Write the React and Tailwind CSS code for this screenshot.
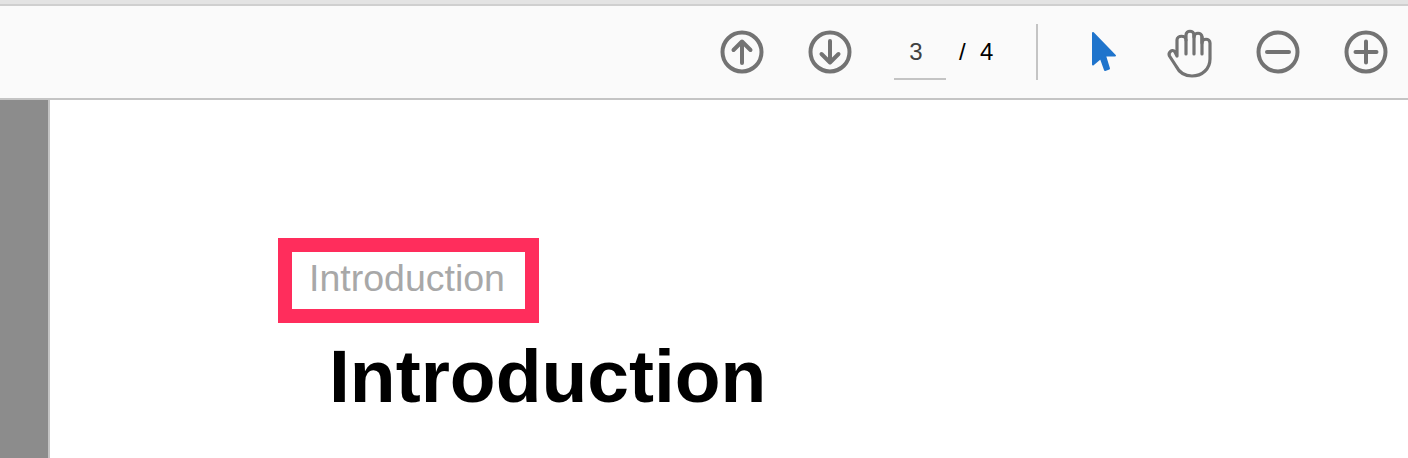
const G = "#737373";
function Circle({ children }) {
  return (
    <svg width="44" height="44" viewBox="0 0 44 44" fill="none" stroke={G} strokeWidth="4" strokeLinecap="round" strokeLinejoin="round">
      <circle cx="22" cy="22" r="19.5" />
      {children}
    </svg>
  );
}
export default function App() {
  return (
    <div className="w-[1408px] h-[458px] overflow-hidden flex flex-col bg-white font-['Liberation_Sans',Arial,sans-serif]">
      <div className="h-1 bg-[#e3e3e3]" />
      <div className="h-[2px] bg-[#cfcfcf]" />
      <div className="h-[92px] bg-[#fafafa] flex items-center justify-end pr-[20px]">
        <Circle><path d="M22 33V12M13.5 20L22 11.5L30.5 20" /></Circle>
        <div className="ml-[44px]"><Circle><path d="M22 11V32M13.5 24L22 32.5L30.5 24" /></Circle></div>
        <div className="ml-[42px] w-[52px] h-[52px] mt-[4px] pb-[2px] pr-[8px] flex items-center justify-center border-b-2 border-[#c4c4c4] text-[24px] text-[#404040]">3</div>
        <div className="ml-[13px] w-[10px] text-[24px] text-black">/</div>
        <div className="ml-[11px] w-[30px] text-[24px] text-black">4</div>
        <div className="ml-[26px] w-[2px] h-[56px] bg-[#c4c4c4]" />
        <svg className="ml-[52px]" width="28" height="42" viewBox="0 0 28 42" fill="#1f74cc" stroke="#1f74cc" strokeWidth="2" strokeLinejoin="round" strokeLinecap="round">
          <path d="M3 2V33.5L10.7 27L15 39L19 37.5L15 24.6L25 24.6Z" />
        </svg>
        <svg className="ml-[48px] mt-[2px]" width="46" height="49" viewBox="0 0 46 49" fill="none" stroke={G} strokeWidth="3.2" strokeLinecap="round" strokeLinejoin="round">
          <path d="M11 27V11C11 6 20 6 20 11V6C20 1 28 1 28 6V8C28 3 36 3 36 8V14C36 9 44 9 44 14V30C44 40 36 47 26 47C17 47 13 43 10 37L3.5 27C2 24 6 19 9 23L11 27" />
          <path d="M20 11V25M28 6V25M36 8V25" />
        </svg>
        <div className="ml-[44px]"><Circle><path d="M11 22H33" /></Circle></div>
        <div className="ml-[44px]"><Circle><path d="M11.5 22H32.5M22 11.5V32.5" /></Circle></div>
      </div>
      <div className="h-[2px] bg-[#c4c4c4]" />
      <div className="flex-1 flex">
        <div className="w-[48px] bg-[#8c8c8c]" />
        <div className="w-[2px] bg-[#c4c4c4]" />
        <div className="flex-1 pl-[228px] pt-[138px]">
          <div className="w-[261px] h-[85px] border-[14px] border-[#ff2d5c] flex items-center pl-[17px] pb-[4px] text-[37.5px] text-[#a8a8a8]">Introduction</div>
          <div className="ml-[51px] mt-[8px] text-[75px] leading-[90px] font-bold text-black">Introduction</div>
        </div>
      </div>
    </div>
  );
}
